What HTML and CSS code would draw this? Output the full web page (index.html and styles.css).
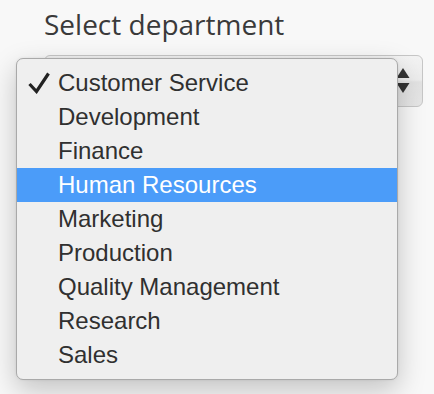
FILE: index.html
```html
<!DOCTYPE html>
<html lang="en">
<head>
    <meta charset="UTF-8">
    <title>Select department</title>
    <link rel="stylesheet" href="styles.css">
</head>
<body>
    <div class="field">
        <label class="field-label">Select department</label>
        <div class="select-box">
            <svg class="select-arrows" width="14" height="30" viewBox="0 0 14 30">
                <polygon points="7,2 13.5,12 0.5,12" />
                <polygon points="0.5,17 13.5,17 7,27" />
            </svg>
        </div>

        <!-- Menu ouvert par-dessus le select -->
        <ul class="dropdown">
            <li class="option selected">
                <svg class="check" width="22" height="22" viewBox="0 0 22 22">
                    <polyline points="1.5,12 8.5,19.5 20.5,1.5" />
                </svg>
                Customer Service
            </li>
            <li class="option">Development</li>
            <li class="option">Finance</li>
            <li class="option active">Human Resources</li>
            <li class="option">Marketing</li>
            <li class="option">Production</li>
            <li class="option">Quality Management</li>
            <li class="option">Research</li>
            <li class="option">Sales</li>
        </ul>
    </div>
</body>
</html>
```

FILE: styles.css
```css
* {
    margin: 0;
    padding: 0;
    box-sizing: border-box;
}

html, body {
    height: 100%;
}

body {
    background-color: #f8f8f8;
    color: #333;
    min-height: 394px;
}

/* Champ */
.field {
    position: relative;
    min-height: 394px;
    padding: 5px 11px 0 44px;
}

.field-label {
    display: block;
    font-family: 'Open Sans', sans-serif;
    font-size: 28px;
    line-height: 38px;
    color: #3a3a3a;
}

.select-box {
    margin-top: 12px;
    height: 52px;
    border: 1px solid #c6c6c6;
    border-radius: 6px;
    background: linear-gradient(#f3f3f3 0%, #ececec 48%, #e2e2e2 52%, #e6e6e6 100%);
    display: flex;
    justify-content: flex-end;
    align-items: center;
    padding-right: 12px;
}

.select-arrows polygon {
    fill: #333;
}

/* Menu déroulant */
.dropdown {
    position: absolute;
    top: 58px;
    left: 16px;
    width: 382px;
    list-style: none;
    padding: 7px 0;
    background-color: #efefef;
    border: 1px solid #a9a9a9;
    border-radius: 7px;
    box-shadow: 0 10px 28px rgba(0, 0, 0, 0.22), 0 0 3px rgba(0, 0, 0, 0.08);
}

.option {
    position: relative;
    height: 34px;
    line-height: 34px;
    padding-left: 41px;
    font-family: 'Liberation Sans', Arial, sans-serif;
    font-size: 24px;
    color: #303030;
    white-space: nowrap;
}

.option.active {
    background-color: #4b9cf9;
    color: #fff;
}

.check {
    position: absolute;
    left: 11px;
    top: 6px;
}

.check polyline {
    fill: none;
    stroke: #222;
    stroke-width: 3.2;
    stroke-linejoin: miter;
}
```
